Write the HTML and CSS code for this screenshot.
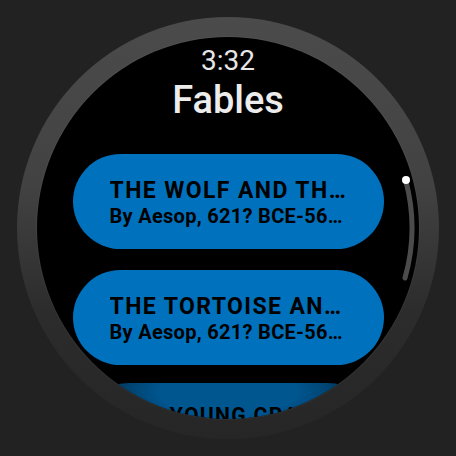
FILE: index.html
```html
<!DOCTYPE html>
<html lang="en">
  <head>
    <meta charset="UTF-8" />
    <meta name="viewport" content="width=device-width, initial-scale=1.0" />
    <title>Fables</title>
    <link rel="stylesheet" href="styles.css">
  </head>
  <body>
    <div class="watch">
      <div class="screen">
        <div class="time">3:32</div>
        <h1 class="title">Fables</h1>
        <div class="list">
          <div class="chip">
            <div class="chip-label">THE WOLF AND THE LAMB</div>
            <div class="chip-secondary">By Aesop, 621? BCE-564 BCE</div>
          </div>
          <div class="chip">
            <div class="chip-label">THE TORTOISE AND THE HARE</div>
            <div class="chip-secondary">By Aesop, 621? BCE-564 BCE</div>
          </div>
          <div class="chip chip-edge">
            <div class="chip-label">THE YOUNG CRAB AND HIS MOTHER</div>
            <div class="chip-secondary">By Aesop, 621? BCE-564 BCE</div>
          </div>
        </div>
        <svg class="scrollbar" width="382" height="382" viewBox="0 0 382 382">
          <path d="M 368.6 143 A 184 184 0 0 1 368 241" fill="none" stroke="#4b4b4b" stroke-width="5" stroke-linecap="round" />
          <circle cx="369" cy="143" r="4" fill="#ffffff" />
        </svg>
      </div>
    </div>
  </body>
</html>
```

FILE: styles.css
```css
body,
html {
  margin: 0;
  padding: 0;
  height: 100%;
  width: 100%;
  overflow: hidden;
  background: #222222;
  font-family: Roboto, "Noto Sans", sans-serif;
}

body {
  display: flex;
  justify-content: center;
  align-items: center;
}

.watch {
  width: 382px;
  height: 382px;
  padding: 20px;
  border-radius: 50%;
  background: linear-gradient(to bottom, #4b4b4b 0%, #424242 40%, #2c2c2c 70%, #262626 100%);
}

.screen {
  position: relative;
  width: 382px;
  height: 382px;
  border-radius: 50%;
  background: #000000;
  overflow: hidden;
  display: flex;
  flex-direction: column;
  align-items: center;
  padding-top: 8px;
  box-sizing: border-box;
  box-shadow: 0 0 0 1px rgba(255, 255, 255, 0.04);
}

.time {
  font-size: 28px;
  line-height: 32px;
  font-weight: 400;
  color: #e6e6e6;
}

.title {
  margin: 1px 0 0;
  font-size: 38px;
  line-height: 44px;
  font-weight: 500;
  color: #ececec;
}

.list {
  display: flex;
  flex-direction: column;
  align-items: center;
  gap: 21px;
  margin-top: 32px;
}

.chip {
  position: relative;
  width: 311px;
  height: 95px;
  box-sizing: border-box;
  padding: 0 37px;
  border-radius: 48px;
  background: #0071bd;
  color: #000000;
  display: flex;
  flex-direction: column;
  justify-content: center;
  padding-top: 2px;
}

.chip-label,
.chip-secondary {
  white-space: nowrap;
  overflow: hidden;
  text-overflow: ellipsis;
}

.chip-label {
  font-size: 23px;
  line-height: 26px;
  font-weight: 700;
  letter-spacing: 1.4px;
}

.chip-secondary {
  font-size: 20px;
  line-height: 24px;
  font-weight: 700;
  letter-spacing: 0.3px;
}

.chip-edge {
  margin-top: -3px;
  transform: scale(0.92);
  transform-origin: center top;
  opacity: 0.76;
}

.chip-edge::after {
  content: "";
  position: absolute;
  inset: 0;
  border-radius: 48px;
  background: radial-gradient(ellipse 60% 70% at 50% 10%, rgba(0, 0, 0, 0) 40%, rgba(0, 0, 0, 0.7) 100%);
}

.scrollbar {
  position: absolute;
  top: 0;
  left: 0;
}
```
